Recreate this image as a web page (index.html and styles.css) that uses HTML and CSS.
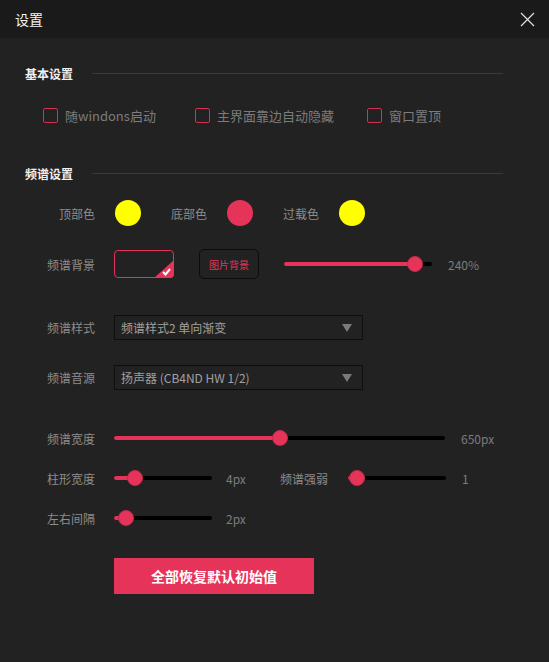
FILE: index.html
```html
<!DOCTYPE html>
<html lang="zh-CN">
<head>
    <meta charset="UTF-8">
    <meta name="viewport" content="width=device-width, initial-scale=1.0">
    <title>设置</title>
    <link rel="stylesheet" href="styles.css">
</head>
<body>
    <div class="window">
        <div class="titlebar">
            <span class="title">设置</span>
            <svg class="close" width="15" height="15" viewBox="0 0 15 15">
                <path d="M1 1 L14 14 M14 1 L1 14" stroke="#e0e0e0" stroke-width="1.2" fill="none"/>
            </svg>
        </div>

        <div class="content">
            <div class="section-head first">
                <span>基本设置</span>
                <div class="rule"></div>
            </div>
            <div class="checks">
                <label class="check w1"><span class="box"></span>随windons启动</label>
                <label class="check w2"><span class="box"></span>主界面靠边自动隐藏</label>
                <label class="check"><span class="box"></span>窗口置顶</label>
            </div>

            <div class="section-head second">
                <span>频谱设置</span>
                <div class="rule"></div>
            </div>

            <div class="row colors">
                <span class="label">顶部色</span>
                <span class="dot yellow"></span>
                <span class="label-inline">底部色</span>
                <span class="dot red"></span>
                <span class="label-inline">过载色</span>
                <span class="dot yellow"></span>
            </div>

            <div class="row bg-row">
                <span class="label">频谱背景</span>
                <div class="bg-box">
                    <svg class="corner" width="20" height="18" viewBox="0 0 20 18">
                        <path d="M20 0 L20 14 Q20 18 16 18 L0 18 Z" fill="#e6335a"/>
                        <path d="M9 12 L11.5 14.5 L16 9" stroke="#fff" stroke-width="2" fill="none"/>
                    </svg>
                </div>
                <button class="pic-btn">图片背景</button>
                <div class="slider s-bg">
                    <div class="fill" style="width:131px"></div>
                    <span class="thumb"></span>
                </div>
                <span class="value">240%</span>
            </div>

            <div class="row select-row first-select">
                <span class="label">频谱样式</span>
                <div class="select">频谱样式2 单向渐变<span class="arrow"></span></div>
            </div>
            <div class="row select-row">
                <span class="label">频谱音源</span>
                <div class="select">扬声器 (CB4ND HW 1/2)<span class="arrow"></span></div>
            </div>

            <div class="row slider-row first-slider">
                <span class="label">频谱宽度</span>
                <div class="slider s-wide">
                    <div class="fill" style="width:166px"></div>
                    <span class="thumb"></span>
                </div>
                <span class="value">650px</span>
            </div>
            <div class="row slider-row">
                <span class="label">柱形宽度</span>
                <div class="slider s-small">
                    <div class="fill" style="width:21px"></div>
                    <span class="thumb"></span>
                </div>
                <span class="value small-val">4px</span>
                <span class="label-inline strength">频谱强弱</span>
                <div class="slider s-small">
                    <div class="fill" style="width:9px"></div>
                    <span class="thumb"></span>
                </div>
                <span class="value">1</span>
            </div>
            <div class="row slider-row">
                <span class="label">左右间隔</span>
                <div class="slider s-small">
                    <div class="fill" style="width:12px"></div>
                    <span class="thumb"></span>
                </div>
                <span class="value small-val">2px</span>
            </div>

            <div class="row reset-row">
                <button class="reset">全部恢复默认初始值</button>
            </div>
        </div>
    </div>
</body>
</html>
```

FILE: styles.css
```css
*{
    margin: 0;
    padding: 0;
    box-sizing: border-box;
}

body{
    width: 549px;
    height: 662px;
    background: #222222;
    font-family: "Noto Sans CJK SC", "Noto Sans", sans-serif;
    color: #8c8c8c;
    overflow: hidden;
}

.titlebar{
    height: 38px;
    background: #1a1a1a;
    display: flex;
    align-items: center;
    justify-content: space-between;
    padding: 0 14px 0 15px;
}

.title{
    font-size: 14px;
    color: #f2f2f2;
}

.content{
    padding: 0 46px 0 25px;
}

.section-head{
    display: flex;
    align-items: center;
    height: 16px;
    font-size: 12px;
    font-weight: bold;
    color: #f0f0f0;
}

.section-head.first{
    margin-top: 27px;
}

.section-head.second{
    margin-top: 42px;
}

.rule{
    flex: 1;
    height: 1px;
    background: #3a3a3a;
    margin-left: 19px;
}

.checks{
    display: flex;
    align-items: center;
    height: 16px;
    margin-top: 26px;
    padding-left: 18px;
    font-size: 13px;
}

.check{
    display: flex;
    align-items: center;
    color: #7c7c7c;
}

.check.w1{
    width: 152px;
}

.check.w2{
    width: 172px;
}

.box{
    width: 15px;
    height: 15px;
    border: 1px solid #d4304f;
    border-radius: 2px;
    margin-right: 7px;
}

.row{
    display: flex;
    align-items: center;
    font-size: 12px;
}

.label{
    width: 70px;
    text-align: right;
    margin-right: 19px;
    flex-shrink: 0;
}

.label-inline{
    margin-left: 30px;
    margin-right: 20px;
}

.colors{
    margin-top: 19px;
    height: 26px;
}

.colors .label{
    margin-right: 20px;
}

.dot{
    width: 26px;
    height: 26px;
    border-radius: 50%;
}

.yellow{
    background: #ffff00;
}

.red{
    background: #e6335a;
}

.bg-row{
    margin-top: 23px;
    height: 30px;
}

.bg-box{
    position: relative;
    width: 60px;
    height: 28px;
    border: 1px solid #e6335a;
    border-radius: 4px;
}

.corner{
    position: absolute;
    right: -1px;
    bottom: -1px;
}

.pic-btn{
    width: 60px;
    height: 30px;
    margin-left: 25px;
    background: #222222;
    border: 1px solid #0c0c0c;
    border-radius: 5px;
    color: #e6335a;
    font-family: inherit;
    font-size: 10px;
}

.slider{
    display: flex;
    align-items: center;
    height: 4px;
    background: #000;
    border-radius: 2px;
}

.fill{
    height: 4px;
    background: #e6335a;
    border-radius: 2px;
}

.thumb{
    width: 16px;
    height: 16px;
    margin-left: -8px;
    border-radius: 50%;
    background: #e6335a;
    border: 1px solid #c42a4b;
    flex-shrink: 0;
}

.s-bg{
    width: 148px;
    margin-left: 25px;
}

.s-wide{
    width: 331px;
}

.s-small{
    width: 98px;
}

.value{
    margin-left: 16px;
    color: #7c7c7c;
}

.small-val{
    width: 24px;
    margin-left: 14px;
}

.strength{
    margin-left: 30px;
}

.select-row{
    height: 25px;
    margin-top: 25px;
}

.select-row.first-select{
    margin-top: 36px;
}

.select{
    width: 249px;
    height: 25px;
    border: 1px solid #0e0e0e;
    display: flex;
    align-items: center;
    justify-content: space-between;
    padding: 0 10px 0 6px;
    color: #a0a0a0;
    font-size: 12px;
}

.arrow{
    width: 0;
    height: 0;
    border-left: 5px solid transparent;
    border-right: 5px solid transparent;
    border-top: 8px solid #7a7a7a;
}

.slider-row{
    height: 16px;
    margin-top: 24px;
}

.slider-row.first-slider{
    margin-top: 40px;
}

.reset-row{
    margin-top: 32px;
    padding-left: 89px;
}

.reset{
    width: 200px;
    height: 36px;
    background: #e6335a;
    border: none;
    color: #ffffff;
    font-family: inherit;
    font-size: 14px;
    font-weight: bold;
}
```
